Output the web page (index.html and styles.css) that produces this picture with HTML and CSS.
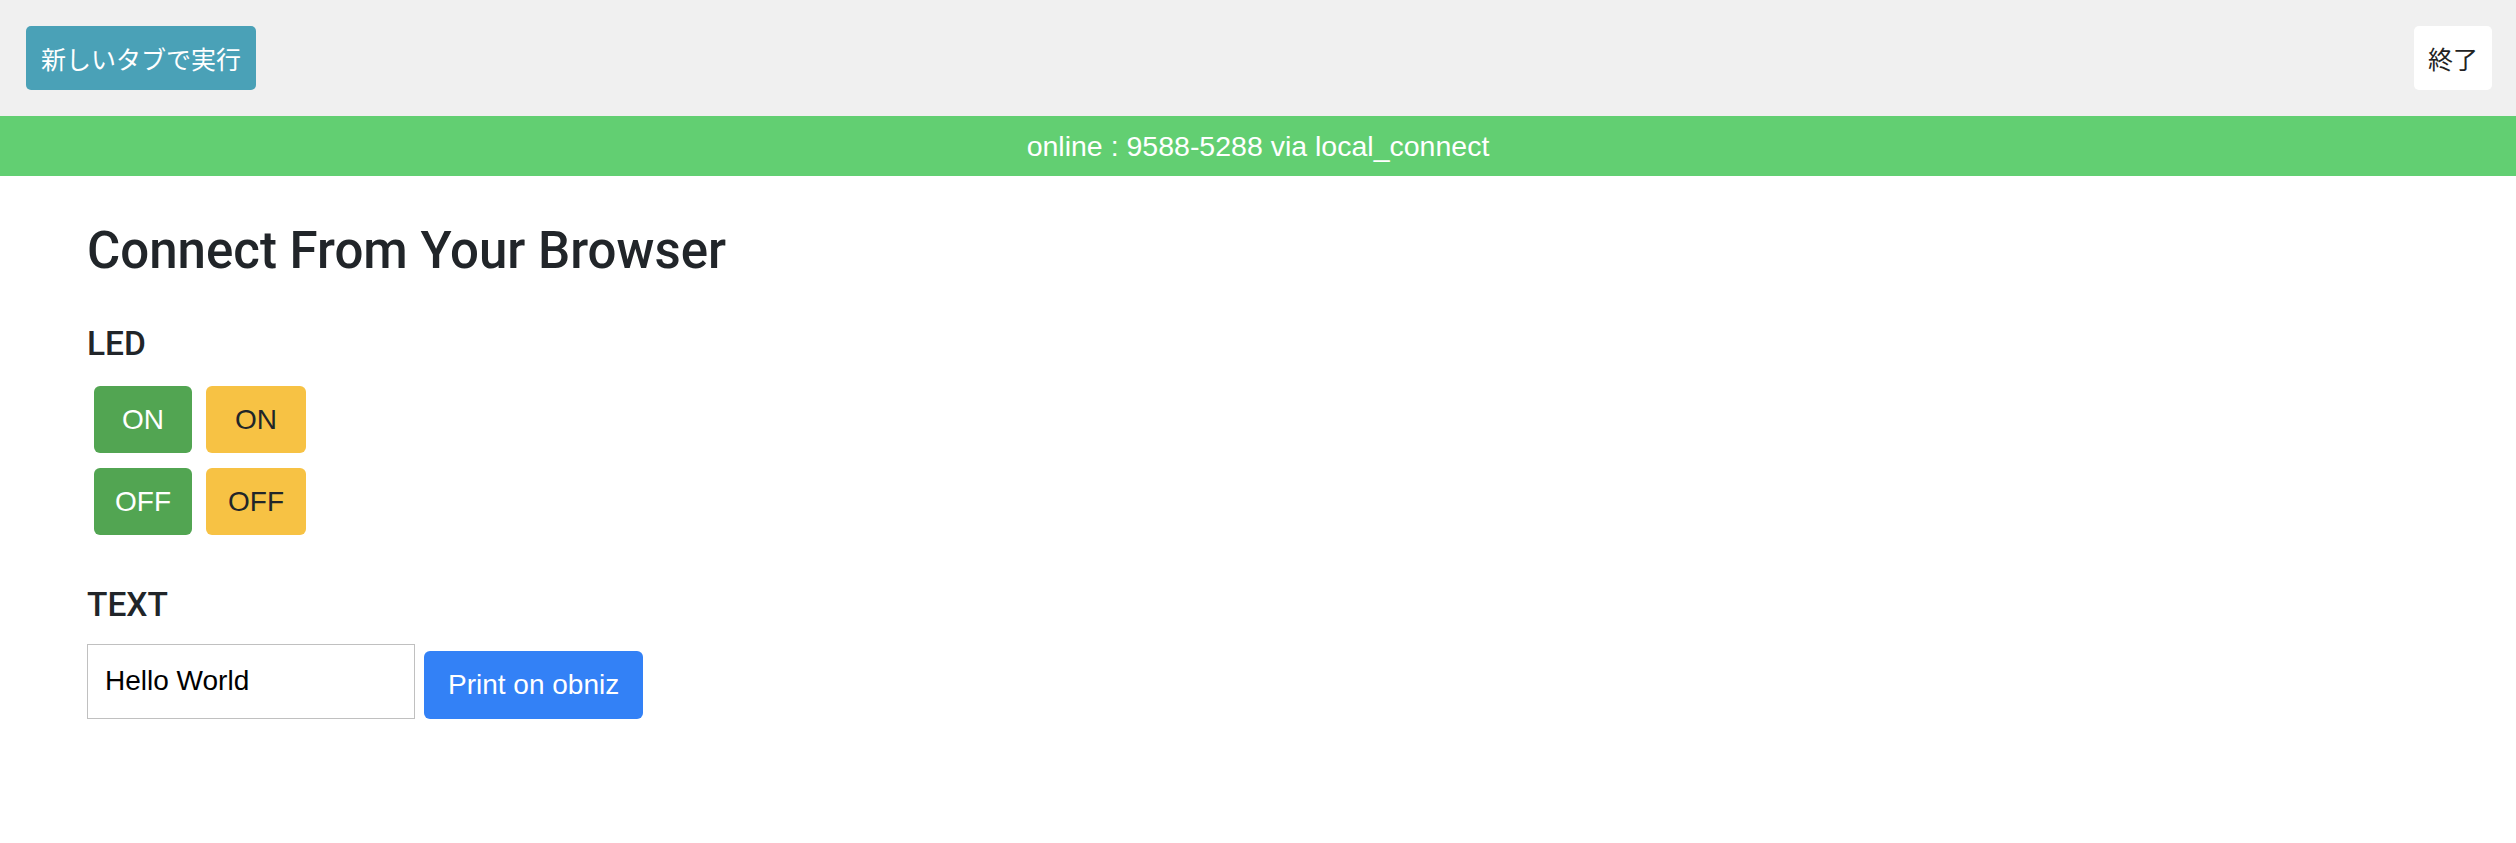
FILE: index.html
```html
<!DOCTYPE html>
<html lang="ja">
<head>
    <meta charset="UTF-8">
    <meta name="viewport" content="width=device-width, initial-scale=1.0">
    <title>obniz</title>
    <link rel="stylesheet" href="styles.css">
</head>
<body>
    <div class="toolbar">
        <button class="btn-run">新しいタブで実行</button>
        <button class="btn-exit">終了</button>
    </div>

    <div class="status">online : 9588-5288 via local_connect</div>

    <div class="content">
        <h2 class="title">Connect From Your Browser</h2>

        <h5 class="section">LED</h5>
        <div class="led-grid">
            <button class="led led-green">ON</button>
            <button class="led led-yellow">ON</button>
            <button class="led led-green">OFF</button>
            <button class="led led-yellow">OFF</button>
        </div>

        <h5 class="section section-text">TEXT</h5>
        <div class="text-row">
            <input class="text-input" type="text" value="Hello World">
            <button class="btn-print">Print on obniz</button>
        </div>
    </div>
</body>
</html>
```

FILE: styles.css
```css
html, body {
    margin: 0;
    padding: 0;
    background-color: white;
    font-family: "Liberation Sans", Arial, sans-serif;
    color: #212529;
}

button {
    border: none;
    cursor: pointer;
}

.toolbar {
    height: 116px;
    box-sizing: border-box;
    background-color: #f0f0f0;
    display: flex;
    justify-content: space-between;
    align-items: flex-start;
    padding: 26px 24px 0 26px;
}

.toolbar button {
    height: 64px;
    border-radius: 5px;
    font-family: "Noto Sans CJK JP", sans-serif;
    font-size: 25px;
    line-height: 1;
}

.btn-run {
    padding: 0 15px;
    background-color: #4aa1b7;
    color: white;
}

.btn-exit {
    padding: 0 14px;
    background-color: white;
    color: #222;
}

.status {
    height: 60px;
    line-height: 60px;
    background-color: #62cf72;
    color: white;
    text-align: center;
    font-size: 28.5px;
}

.content {
    padding-left: 87px;
}

.title {
    margin: 44px 0 0 0;
    font-family: Roboto, "Liberation Sans", sans-serif;
    font-size: 51px;
    font-weight: 500;
    line-height: 1.2;
}

.section {
    margin: 43px 0 0 0;
    font-family: Roboto, "Liberation Sans", sans-serif;
    font-size: 33.5px;
    font-weight: 500;
    line-height: 1.2;
}

.section-text {
    margin-top: 50px;
}

.led-grid {
    display: grid;
    grid-template-columns: 98px 100px;
    column-gap: 14px;
    row-gap: 15px;
    margin: 22px 0 0 7px;
}

.led {
    height: 67px;
    border-radius: 6px;
    font-family: "Liberation Sans", Arial, sans-serif;
    font-size: 28px;
}

.led-green {
    background-color: #52a552;
    color: white;
}

.led-yellow {
    background-color: #f7c244;
    color: #212529;
}

.text-row {
    display: flex;
    align-items: flex-end;
    gap: 9px;
    margin-top: 18px;
}

.text-input {
    width: 328px;
    height: 75px;
    box-sizing: border-box;
    margin: 0;
    border: 1px solid #c0c0c0;
    padding: 0 0 0 17px;
    font-family: "Liberation Sans", Arial, sans-serif;
    font-size: 28px;
    color: black;
    outline: none;
}

.btn-print {
    height: 68px;
    padding: 0 24px;
    border-radius: 6px;
    background-color: #3381f6;
    color: white;
    font-family: "Liberation Sans", Arial, sans-serif;
    font-size: 28px;
}
```
